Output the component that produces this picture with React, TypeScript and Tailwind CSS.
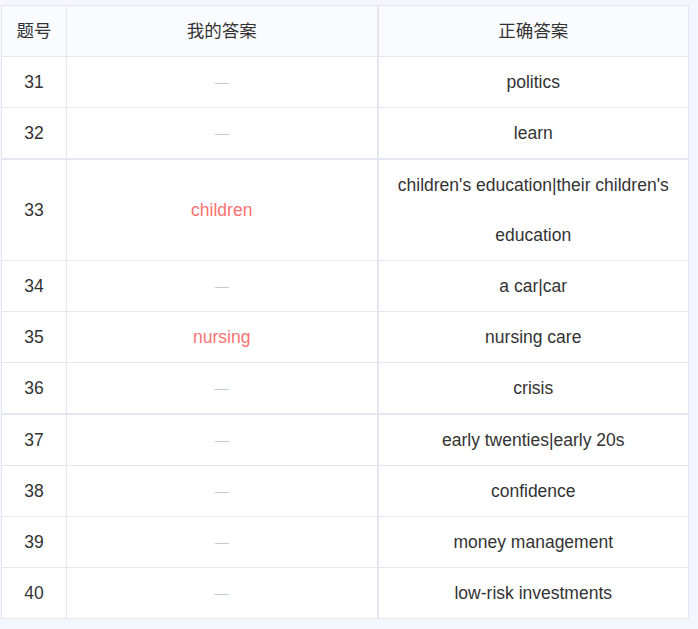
const rows: { no: number; mine: string | null; correct: string; thick?: boolean }[] = [
  { no: 31, mine: null, correct: "politics" },
  { no: 32, mine: null, correct: "learn" },
  { no: 33, mine: "children", correct: "children's education|their children's education", thick: true },
  { no: 34, mine: null, correct: "a car|car" },
  { no: 35, mine: "nursing", correct: "nursing care" },
  { no: 36, mine: null, correct: "crisis" },
  { no: 37, mine: null, correct: "early twenties|early 20s", thick: true },
  { no: 38, mine: null, correct: "confidence" },
  { no: 39, mine: null, correct: "money management" },
  { no: 40, mine: null, correct: "low-risk investments" },
];

export default function App() {
  return (
    <div
      className="h-[629px] w-[698px] bg-[#f4f6fd] pt-[5px] pl-px text-[17.5px] text-[#333]"
      style={{ fontFamily: '"Liberation Sans", Arial, "Noto Sans CJK SC", sans-serif' }}
    >
      <table className="w-[687px] table-fixed border-collapse border border-[#e6e6f2] bg-white text-center">
        <colgroup>
          <col className="w-[65px]" />
          <col className="w-[311px]" />
          <col className="w-[311px]" />
        </colgroup>
        <thead>
          <tr className="bg-[#fafbfe]">
            <th className="h-[51px] border border-[#e6e6f2] font-normal leading-[50px]">题号</th>
            <th className="border border-[#e6e6f2] border-r-2 font-normal leading-[50px]">我的答案</th>
            <th className="border border-[#e6e6f2] font-normal leading-[50px]">正确答案</th>
          </tr>
        </thead>
        <tbody>
          {rows.map((r) => (
            <tr
              key={r.no}
              className={r.thick ? "border-t-2 border-[#e6e6f2]" : "border-t border-[#e6e6f2]"}
            >
              <td className="h-[49px] border border-[#e6e6f2] leading-[49px]">{r.no}</td>
              <td className="border border-[#e6e6f2] border-r-2 leading-[49px]">
                {r.mine ? (
                  <span className="text-[#f87272]">{r.mine}</span>
                ) : (
                  <span className="inline-block align-top text-[14px] leading-[49px] text-[#c4c9d6]">—</span>
                )}
              </td>
              <td className="border border-[#e6e6f2] px-[14px] leading-[50px]">{r.correct}</td>
            </tr>
          ))}
        </tbody>
      </table>
    </div>
  );
}
